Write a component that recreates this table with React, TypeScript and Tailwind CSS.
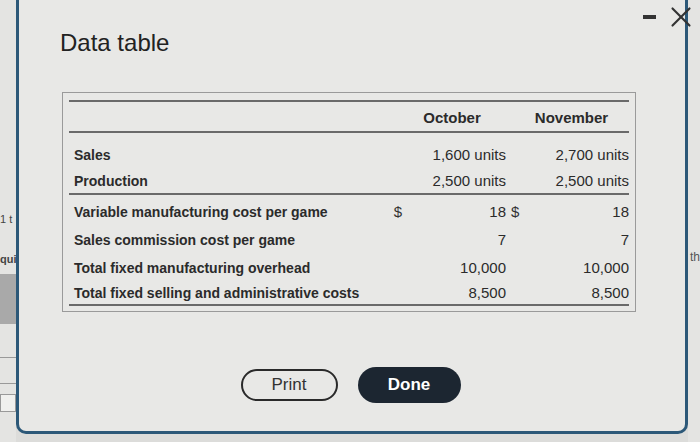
import { X } from 'lucide-react';

const rows1 = [
  { label: 'Sales', oct: '1,600 units', nov: '2,700 units' },
  { label: 'Production', oct: '2,500 units', nov: '2,500 units' },
];

const rows2 = [
  { label: 'Variable manufacturing cost per game', oct: '18', nov: '18', dollar: true },
  { label: 'Sales commission cost per game', oct: '7', nov: '7' },
  { label: 'Total fixed manufacturing overhead', oct: '10,000', nov: '10,000' },
  { label: 'Total fixed selling and administrative costs', oct: '8,500', nov: '8,500' },
];

function Row({ label, oct, nov, dollar, h }: { label: string; oct: string; nov: string; dollar?: boolean; h: string }) {
  return (
    <div className={`grid grid-cols-[319px_20px_98px_16px_1fr] items-center ${h}`}>
      <div className="pl-[5px] text-[14px] font-bold text-[#2b2b2b]">{label}</div>
      <div className="text-center text-[15px] text-[#333]">{dollar ? '$' : ''}</div>
      <div className="text-right text-[15px] text-[#2b2b2b]">{oct}</div>
      <div className="pl-[5px] text-[15px] text-[#333]">{dollar ? '$' : ''}</div>
      <div className="text-right text-[15px] text-[#2b2b2b]">{nov}</div>
    </div>
  );
}

export default function App() {
  return (
    <div
      className="flex h-[442px] w-[700px] overflow-hidden bg-[#dcdcda]"
      style={{ fontFamily: '"Liberation Sans", Arial, sans-serif' }}
    >
      {/* underlying page, left strip */}
      <div className="flex w-[16px] shrink-0 flex-col bg-[#e4e4e2] text-[11px] text-[#444]">
        <div className="h-[212px]" />
        <div className="leading-[14px]">1 t</div>
        <div className="h-[26px]" />
        <div className="font-bold leading-[14px]">qui</div>
        <div className="mt-[8px] h-[50px] bg-[#a9a9a9]" />
        <div className="h-[34px] border-b border-[#999]" />
        <div className="h-[26px] border-b border-[#999]" />
        <div className="mt-[10px] h-[18px] border border-[#999] bg-[#f0f0ee]" />
      </div>

      {/* dialog */}
      <div className="flex h-[434px] w-[672px] shrink-0 flex-col rounded-b-[10px] border-x-[3px] border-b-[3px] border-[#2c5878] bg-[#e8e8e6] pl-[41px]">
        <div className="flex items-start justify-between">
          <div className="pt-[29px] text-[24px] leading-[28px] text-[#222]">Data table</div>
          <div className="relative z-10 -mr-[13px] flex items-center gap-[8px]">
            <div className="h-[4px] w-[13px] bg-[#333]" />
            <X size={34} strokeWidth={1.5} className="text-[#333]" />
          </div>
        </div>

        <div className="ml-[2px] mt-[35px] w-[574px] border border-[#9a9a9a] px-[6px] pt-[7px] pb-[5px]">
          <div className="border-t-2 border-[#6a6a6a]" />
          <div className="grid h-[31px] grid-cols-[319px_20px_98px_16px_1fr] items-center border-b-2 border-[#6a6a6a] pt-[3px] text-[15px] font-bold text-[#2b2b2b]">
            <div />
            <div />
            <div className="pr-[10px] text-center">October</div>
            <div />
            <div className="pr-[8px] text-center">November</div>
          </div>
          <div className="border-b-2 border-[#6a6a6a] pt-[8px]">
            <Row {...rows1[0]} h="h-[28px]" />
            <Row {...rows1[1]} h="h-[24px]" />
          </div>
          <div className="border-b-2 border-[#6a6a6a] pt-[3px]">
            <Row {...rows2[0]} h="h-[28px]" />
            <Row {...rows2[1]} h="h-[28px]" />
            <Row {...rows2[2]} h="h-[28px]" />
            <Row {...rows2[3]} h="h-[22px]" />
          </div>
        </div>

        <div className="mt-[55px] flex items-center justify-center gap-[20px] pr-[44px]">
          <button className="h-[32px] w-[97px] rounded-full border-2 border-[#2a2a2a] text-[17px] text-[#333]">
            Print
          </button>
          <button className="h-[36px] w-[103px] rounded-full bg-[#1c2631] text-[17px] font-bold text-white">
            Done
          </button>
        </div>
      </div>

      {/* underlying page, right strip */}
      <div className="flex flex-1 flex-col bg-[#e4e4e2] pl-[2px] text-[12px] text-[#555]">
        <div className="h-[248px]" />
        <div>th</div>
      </div>
    </div>
  );
}
